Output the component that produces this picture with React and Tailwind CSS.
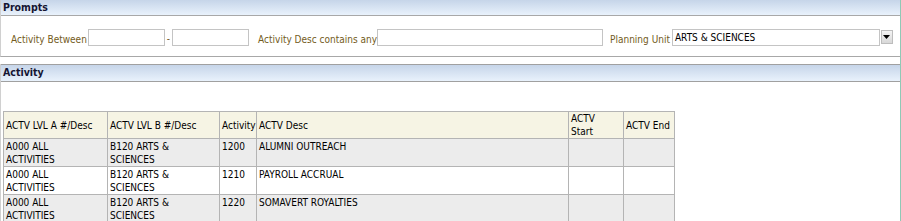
import React from "react";

const rows = [
  { a: ["A000 ALL", "ACTIVITIES"], b: ["B120 ARTS &", "SCIENCES"], n: "1200", d: "ALUMNI OUTREACH" },
  { a: ["A000 ALL", "ACTIVITIES"], b: ["B120 ARTS &", "SCIENCES"], n: "1210", d: "PAYROLL ACCRUAL" },
  { a: ["A000 ALL", "ACTIVITIES"], b: ["B120 ARTS &", "SCIENCES"], n: "1220", d: "SOMAVERT ROYALTIES" },
  { a: ["A000 ALL", "ACTIVITIES"], b: ["B120 ARTS &", "SCIENCES"], n: "1230", d: "OTHER" },
];

const cell = "border border-[#b4b4b4] align-top px-[2px] pt-[1px] leading-[13px]";
const th = "border border-[#b4b4b4] font-normal text-left align-middle px-[2px] leading-[13px] overflow-hidden";

export default function App() {
  return (
    <div
      className="w-[901px] h-[221px] overflow-hidden bg-white border-r border-[#8fc9b6] text-[10px]"
      style={{ fontFamily: '"DejaVu Sans Condensed", "DejaVu Sans", sans-serif', fontStretch: "condensed" }}
    >
      {/* Prompts */}
      <div className="border-b border-[#a8a8a8] border-l border-l-[#d0d0d0]">
        <div className="h-[16px] border-b border-[#a8a8a8] bg-gradient-to-b from-[#c6d5e9] to-[#e9f2fc] pl-[2px] font-bold text-[10.5px] text-[#141432] leading-[14px]">
          Prompts
        </div>
        <div className="h-[40px] flex items-start pt-[13px] pl-[10px] text-[#735b22] whitespace-nowrap text-[10px]">
          <span className="leading-[17px] mt-[2px] shrink-0">Activity Between</span>
          <div className="shrink-0 ml-[1px] w-[77px] h-[17px] border border-[#c4c4c4]" />
          <span className="shrink-0 mx-[2px] leading-[17px] mt-[1px]">-</span>
          <div className="shrink-0 w-[77px] h-[17px] border border-[#c4c4c4]" />
          <span className="shrink-0 ml-[9px] leading-[17px] mt-[2px]">Activity Desc contains any</span>
          <div className="shrink-0 w-[226px] h-[17px] border border-[#c4c4c4]" />
          <span className="shrink-0 ml-[7px] leading-[17px] mt-[2px]">Planning Unit</span>
          <div className="shrink-0 ml-[2px] w-[208px] h-[17px] border border-[#c4c4c4] text-black text-[10px] leading-[15px] pl-[2px]">
            ARTS &amp; SCIENCES
          </div>
          <div className="shrink-0 ml-[1px] mt-[1px] w-[12px] h-[14px] border border-[#bdbdbd] bg-gradient-to-b from-[#f4f4f4] to-[#d8d8d8] flex items-center justify-center">
            <svg width="7" height="4" viewBox="0 0 7 4">
              <polygon points="0,0 7,0 3.5,4" fill="#000" />
            </svg>
          </div>
        </div>
      </div>

      {/* Activity */}
      <div className="mt-[7px] border-l border-[#d0d0d0]">
        <div className="h-[18px] border-t border-b border-[#a0a0a0] bg-gradient-to-b from-[#c6d5e9] to-[#e9f2fc] pl-[2px] font-bold text-[10.5px] text-[#141432] leading-[15px]">
          Activity
        </div>
        <div className="pt-[29px] pl-[2px]">
          <table className="border-collapse table-fixed w-[671px] text-[10px] text-black">
            <colgroup>
              <col className="w-[104px]" />
              <col className="w-[112px]" />
              <col className="w-[37px]" />
              <col className="w-[312px]" />
              <col className="w-[55px]" />
              <col className="w-[51px]" />
            </colgroup>
            <thead>
              <tr className="bg-[#f6f4e4] h-[27px]">
                <th className={th}>ACTV LVL A #/Desc</th>
                <th className={th}>ACTV LVL B #/Desc</th>
                <th className={th}>Activity</th>
                <th className={th}>ACTV Desc</th>
                <th className={th}>
                  ACTV
                  <br />
                  Start
                </th>
                <th className={th}>ACTV End</th>
              </tr>
            </thead>
            <tbody>
              {rows.map((r, i) => (
                <tr key={i} className={i % 2 === 0 ? "bg-[#ececec] h-[27px]" : "bg-white h-[27px]"}>
                  <td className={cell}>
                    {r.a[0]}
                    <br />
                    {r.a[1]}
                  </td>
                  <td className={cell}>
                    {r.b[0]}
                    <br />
                    {r.b[1]}
                  </td>
                  <td className={cell}>{r.n}</td>
                  <td className={cell}>{r.d}</td>
                  <td className={cell}></td>
                  <td className={cell}></td>
                </tr>
              ))}
            </tbody>
          </table>
        </div>
      </div>
    </div>
  );
}
